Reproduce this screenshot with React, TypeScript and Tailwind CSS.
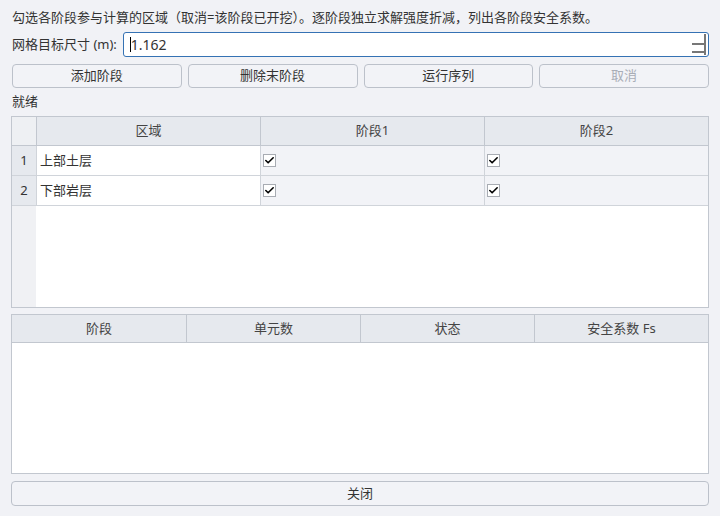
import { Check } from "lucide-react";

const font = { fontFamily: '"Noto Sans", "Noto Sans CJK SC", sans-serif' };

function Btn({ label, disabled }: { label: string; disabled?: boolean }) {
  return (
    <button
      className={`h-[24px] rounded-[4px] border border-[#bcc1ca] bg-[#f2f3f7] text-[13px] ${
        disabled ? "text-[#a9adb6]" : "text-[#333]"
      }`}
    >
      {label}
    </button>
  );
}

function Box() {
  return (
    <span className="flex h-[13px] w-[13px] items-center justify-center border border-[#a8acb3] bg-white">
      <Check size={11} strokeWidth={3.5} className="text-black" />
    </span>
  );
}

const regions = ["上部土层", "下部岩层"];

export default function App() {
  return (
    <div className="h-[516px] w-[720px] bg-[#f1f2f6] px-[11px] text-[13px] text-[#333]" style={font}>
      <div className="flex h-[30px] items-end pb-[3px] pl-[1px]">
        勾选各阶段参与计算的区域（取消=该阶段已开挖）。逐阶段独立求解强度折减，列出各阶段安全系数。
      </div>
      <div className="mt-[2px] flex h-[25px] items-center gap-[6px]">
        <span className="pl-[1px]">网格目标尺寸 (m):</span>
        <div className="flex h-[25px] flex-1 items-center rounded-[3px] border border-[#3572b4] bg-white pl-[6px] pr-[2px]">
          <span className="h-[15px] w-px bg-black" />
          <span className="flex-1 text-[14px]">1.162</span>
          <span className="flex h-[21px] w-[14px] flex-col justify-between border-r-2 border-[#777] py-[2px]">
            <span />
            <span className="h-[2px] w-[12px] bg-[#777]" />
            <span className="h-[2px] w-[12px] bg-[#777]" />
          </span>
        </div>
      </div>
      <div className="mt-[7px] grid grid-cols-4 gap-[6px] pl-[1px]">
        <Btn label="添加阶段" />
        <Btn label="删除末阶段" />
        <Btn label="运行序列" />
        <Btn label="取消" disabled />
      </div>
      <div className="flex h-[28px] items-center pl-[1px]">就绪</div>

      <div className="flex h-[192px] flex-col border border-[#c2c7cf] bg-white">
        <div className="grid h-[29px] grid-cols-[24px_1fr_1fr_1fr] border-b border-[#c2c7cf] bg-[#e6e9ee] text-[#444]">
          <div className="bg-[#eef0f3]" />
          <div className="flex items-center justify-center border-l border-[#c2c7cf]">区域</div>
          <div className="flex items-center justify-center border-l border-[#c2c7cf]">阶段1</div>
          <div className="flex items-center justify-center border-l border-[#c2c7cf]">阶段2</div>
        </div>
        {regions.map((r, i) => (
          <div key={r} className="grid h-[30px] grid-cols-[24px_1fr_1fr_1fr] border-b border-[#d0d4da]">
            <div className="flex items-center justify-center bg-[#e6e9ee] text-[#333]">{i + 1}</div>
            <div className="flex items-center border-l border-[#d0d4da] bg-white pl-[3px]">{r}</div>
            <div className="flex items-center border-l border-[#d0d4da] bg-[#f2f3f7] pl-[2px]">
              <Box />
            </div>
            <div className="flex items-center border-l border-[#d0d4da] bg-[#f2f3f7] pl-[2px]">
              <Box />
            </div>
          </div>
        ))}
        <div className="flex flex-1">
          <div className="w-[24px] bg-[#f0f1f4]" />
          <div className="flex-1 bg-white" />
        </div>
      </div>

      <div className="mt-[6px] flex h-[160px] flex-col border border-[#c2c7cf] bg-white">
        <div className="grid h-[28px] grid-cols-4 border-b border-[#c2c7cf] bg-[#e6e9ee] text-[#444]">
          <div className="flex items-center justify-center">阶段</div>
          <div className="flex items-center justify-center border-l border-[#c2c7cf]">单元数</div>
          <div className="flex items-center justify-center border-l border-[#c2c7cf]">状态</div>
          <div className="flex items-center justify-center border-l border-[#c2c7cf]">安全系数 Fs</div>
        </div>
        <div className="flex-1" />
      </div>

      <div className="mt-[7px] flex">
        <button className="h-[25px] flex-1 rounded-[4px] border border-[#bcc1ca] bg-[#f2f3f7] text-[13px] text-[#333]">
          关闭
        </button>
      </div>
    </div>
  );
}
